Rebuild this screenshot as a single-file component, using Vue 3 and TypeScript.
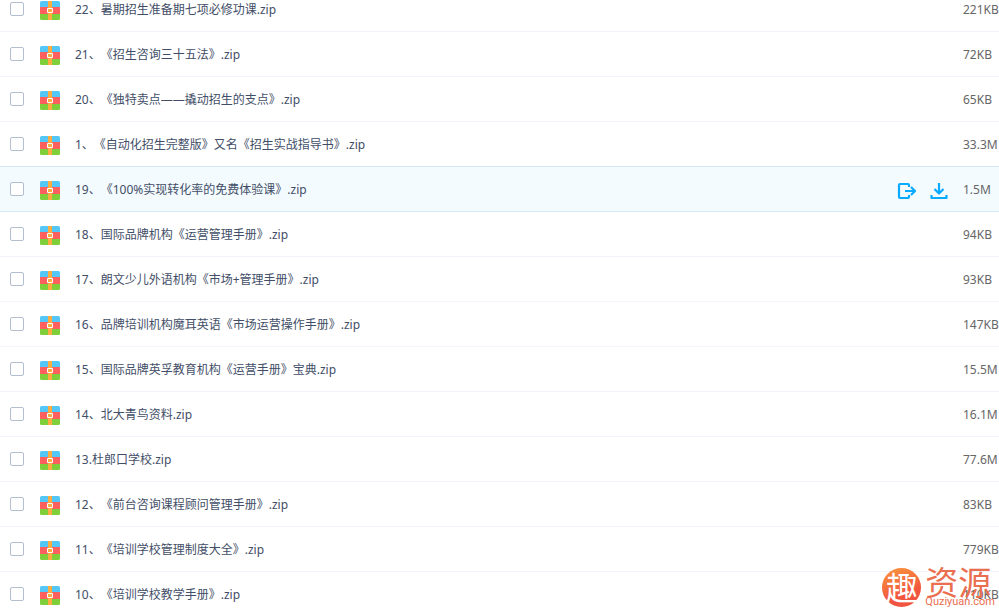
<script setup lang="ts">
interface FileItem {
  name: string
  size: string
  active?: boolean
}

const files: FileItem[] = [
  { name: '22、暑期招生准备期七项必修功课.zip', size: '221KB' },
  { name: '21、《招生咨询三十五法》.zip', size: '72KB' },
  { name: '20、《独特卖点——撬动招生的支点》.zip', size: '65KB' },
  { name: '1、《自动化招生完整版》又名《招生实战指导书》.zip', size: '33.3M' },
  { name: '19、《100%实现转化率的免费体验课》.zip', size: '1.5M', active: true },
  { name: '18、国际品牌机构《运营管理手册》.zip', size: '94KB' },
  { name: '17、朗文少儿外语机构《市场+管理手册》.zip', size: '93KB' },
  { name: '16、品牌培训机构魔耳英语《市场运营操作手册》.zip', size: '147KB' },
  { name: '15、国际品牌英孚教育机构《运营手册》宝典.zip', size: '15.5M' },
  { name: '14、北大青鸟资料.zip', size: '16.1M' },
  { name: '13.杜郎口学校.zip', size: '77.6M' },
  { name: '12、《前台咨询课程顾问管理手册》.zip', size: '83KB' },
  { name: '11、《培训学校管理制度大全》.zip', size: '779KB' },
  { name: '10、《培训学校教学手册》.zip', size: '110KB' },
]
</script>

<template>
  <main class="viewport">
    <ul class="list">
      <li v-for="(file, i) in files" :key="file.name" class="row" :class="{ active: file.active }">
        <input :id="`file-${i}`" class="check" type="checkbox" />
        <svg class="zip" viewBox="0 0 20 19" aria-hidden="true">
          <path fill="#55c7f7" d="M0 6V1.500Q0 0 1.500 0H18.500Q20 0 20 1.500V6z" />
          <path fill="#ff5f5d" d="M0 6H20V13H0z" />
          <path fill="#7fcf3b" d="M0 13H20V17.500Q20 19 18.500 19H1.500Q0 19 0 17.500z" />
          <path fill="#ffac41" d="M8 0H12V19H8z" />
          <path fill="#ffac41" stroke="#fff" d="M7.500 7.500H12.500V11.500H7.500z" />
        </svg>
        <label class="name" :for="`file-${i}`">{{ file.name }}</label>
        <div v-if="file.active" class="actions">
          <button type="button" aria-label="转存">
            <svg viewBox="0 0 20 18" aria-hidden="true">
              <path d="M12 5V3Q12 2 11 2H3Q2 2 2 3V15Q2 16 3 16H11Q12 16 12 15V13M8 9H18M14 5L18 9L14 13" />
            </svg>
          </button>
          <button type="button" aria-label="下载">
            <svg viewBox="0 0 20 18" aria-hidden="true">
              <path d="M10 1V12M5.500 7L10 11.500L14.500 7M2.500 13V16H17.500V13" />
            </svg>
          </button>
        </div>
        <span class="size">{{ file.size }}</span>
      </li>
    </ul>
    <div class="brand">
      <span class="badge">趣</span>
      <span class="words">
        <span class="title">资源</span>
        <span class="domain">Quziyuan.com</span>
      </span>
    </div>
  </main>
</template>

<style>
body {
  margin: 0;
  background: #fff;
}
</style>

<style scoped>
.viewport {
  position: relative;
  height: 100vh;
  overflow: hidden;
  font: 12px/18px "Noto Sans", "Noto Sans CJK SC", sans-serif;
  text-spacing-trim: space-all;
  color: #424e67;
}
.list {
  list-style: none;
  margin: -13px 0 0;
  padding: 0;
}
.row {
  display: flex;
  align-items: center;
  box-sizing: border-box;
  height: 45px;
  padding-left: 10px;
  border-bottom: 1px solid #f1f5fb;
}
.row.active {
  height: 46px;
  margin-top: -1px;
  background: #f4fbff;
  border-top: 1px solid #d4e9f8;
  border-bottom-color: #d4e9f8;
}
.check {
  appearance: none;
  box-sizing: border-box;
  width: 14px;
  height: 14px;
  margin: 0;
  border: 1px solid #b3bfce;
  border-radius: 2px;
  background: #fff;
}
.zip {
  width: 20px;
  height: 19px;
  margin: 2px 15px 0 16px;
}
.name {
  flex: 1;
  padding-top: 2px;
  white-space: nowrap;
}
.actions {
  display: flex;
  gap: 12px;
  margin-right: 14px;
  padding-top: 4px;
}
.actions button {
  display: block;
  padding: 0;
  border: 0;
  background: none;
}
.actions svg {
  display: block;
  width: 20px;
  height: 18px;
  fill: none;
  stroke: #09aaff;
  stroke-width: 2.2;
  stroke-linejoin: round;
}
.size {
  width: 36px;
  padding-top: 2px;
  color: #666;
  white-space: nowrap;
}
.brand {
  position: absolute;
  right: 4px;
  bottom: 3px;
  display: flex;
  align-items: center;
  gap: 4px;
  color: #ea6e50;
}
.badge {
  width: 39px;
  height: 39px;
  border-radius: 50%;
  background: linear-gradient(160deg, #f99a3c, #f2553f 65%);
  color: #fff;
  font-size: 32px;
  line-height: 39px;
  text-align: center;
}
.words {
  display: flex;
  flex-direction: column;
}
.title {
  padding-top: 4px;
  font-size: 33px;
  line-height: 26px;
}
.domain {
  font: 11px/12px Roboto, sans-serif;
}
</style>
